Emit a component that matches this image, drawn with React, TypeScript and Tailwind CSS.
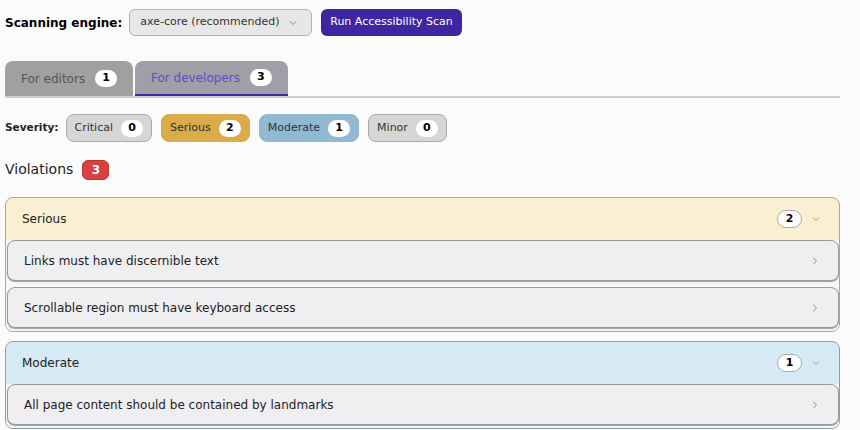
import { ChevronDown, ChevronRight } from 'lucide-react';

const font = { fontFamily: '"DejaVu Sans", Verdana, sans-serif' };

function Count({ n, className = '' }: { n: number; className?: string }) {
  return (
    <span className={`inline-flex items-center justify-center min-w-[22px] h-[17px] px-1.5 rounded-full bg-white text-black font-bold text-[11px] ${className}`}>{n}</span>
  );
}

const chips = [
  { label: 'Critical', n: 0, cls: 'bg-[#d6d6d6] border-[#a9a9a9]' },
  { label: 'Serious', n: 2, cls: 'bg-[#d9ab49] border-[#d9ab49]' },
  { label: 'Moderate', n: 1, cls: 'bg-[#8fbad2] border-[#8fbad2]' },
  { label: 'Minor', n: 0, cls: 'bg-[#d6d6d6] border-[#a9a9a9]' },
];

const groups = [
  { title: 'Serious', head: 'bg-[#faefd2]', border: 'border-[#b8a67f]', items: ['Links must have discernible text', 'Scrollable region must have keyboard access'] },
  { title: 'Moderate', head: 'bg-[#d5eaf5]', border: 'border-[#8b9fae]', items: ['All page content should be contained by landmarks'] },
];

export default function App() {
  return (
    <div className="min-h-[430px] bg-[#fbfbfb] text-[#222] px-[5px] pt-[9px] overflow-hidden" style={font}>
      <div className="flex items-center gap-[9px]">
        <span className="font-bold text-[12px] text-black -mr-[2px]">Scanning engine:</span>
        <div className="flex items-center justify-between w-[183px] h-[27px] rounded-md border border-[#b0b0b0] bg-[#e7e7e7] pl-[10px] pr-[12px] text-[11px] text-[#333] whitespace-nowrap">
          <span>axe-core (recommended)</span>
          <ChevronDown className="w-3 h-3 text-[#888]" />
        </div>
        <button className="h-[27px] px-[9px] rounded-md bg-[#3e26a0] text-white text-[11px] whitespace-nowrap">Run Accessibility Scan</button>
      </div>

      <div className="mt-[25px] flex gap-[2px] border-b-2 border-[#cccccc] w-[835px]">
        <div className="flex items-center gap-[10px] w-[128px] h-[35px] pl-[16px] rounded-t-lg bg-[#a0a0a0] text-[12px] text-[#555]">
          For editors <Count n={1} />
        </div>
        <div className="flex items-center gap-[10px] w-[153px] h-[35px] pl-[16px] rounded-t-lg bg-[#a09fa7] text-[12px] text-[#5b4cc4] border-b-2 border-[#3e26a0] -mb-[2px]">
          For developers <Count n={3} />
        </div>
      </div>

      <div className="mt-[16px] flex items-center gap-[9px]">
        <span className="font-bold text-[10.5px] text-[#222] -mr-[2px]">Severity:</span>
        {chips.map(c => (
          <div key={c.label} className={`flex items-center gap-[8px] h-[28px] px-[8px] rounded-lg border ${c.cls} text-[11px] text-[#333]`}>
            {c.label} <Count n={c.n} />
          </div>
        ))}
      </div>

      <div className="mt-[17px] flex items-center gap-[9px]">
        <span className="text-[14px] text-[#222]">Violations</span>
        <span className="inline-flex items-center justify-center w-[27px] h-[20px] rounded-md bg-[#d9403e] border border-[#b93432] text-white font-bold text-[12px]">3</span>
      </div>

      <div className="mt-[17px] flex flex-col gap-[9px] w-[835px]">
        {groups.map(g => (
          <div key={g.title} className={`rounded-lg border ${g.border} ${g.head} overflow-hidden`}>
            <div className="flex items-center justify-between h-[42px] pl-[16px] pr-[17px] text-[12px] text-[#222]">
              <span>{g.title}</span>
              <span className="flex items-center gap-[8px]">
                <Count n={g.items.length} className="border border-[#aaa] h-[18px] min-w-[25px]" />
                <ChevronDown className="w-3 h-3 text-[#999]" />
              </span>
            </div>
            <div className="flex flex-col gap-[6px] bg-[#f7f7f7] pb-[3px]">
              {g.items.map(t => (
                <div key={t} className="flex items-center justify-between h-[41px] ml-[1px] pl-[16px] pr-[17px] rounded-lg border border-[#9a9a9a] bg-[#efeff1] shadow-[0_1px_1px_rgba(0,0,0,0.35)] text-[12px] text-[#222]">
                  <span>{t}</span>
                  <ChevronRight className="w-3 h-3 text-[#888]" />
                </div>
              ))}
            </div>
          </div>
        ))}
      </div>
    </div>
  );
}
